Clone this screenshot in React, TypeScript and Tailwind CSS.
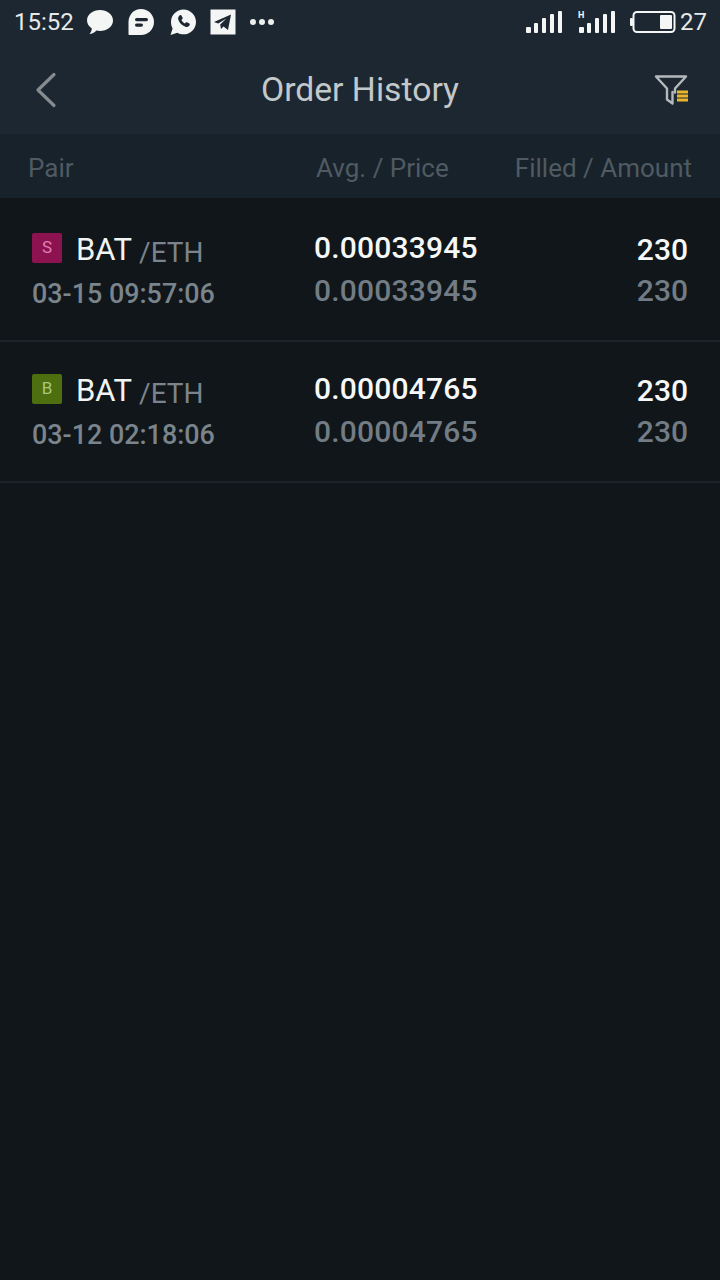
const orders = [
  { side: "S", badge: "bg-[#8c1350] text-[#e07fb0]", time: "03-15 09:57:06", price: "0.00033945", amount: "230" },
  { side: "B", badge: "bg-[#4d6f10] text-[#a9c77a]", time: "03-12 02:18:06", price: "0.00004765", amount: "230" },
];

function StatusBar() {
  return (
    <div className="flex h-[44px] items-center pl-[14px] pr-[13px] text-[24px] leading-none text-[#e6e9ea]">
      <span>15:52</span>
      <div className="ml-[12px] flex items-center gap-[13.5px]">
        <svg width="28" height="28" viewBox="0 0 28 28" fill="#f4f5f5">
          <path d="M14 2c7 0 13 4.400 13 10.500S21 23 14 23c-1.300 0-2.500-.1-3.600-.4C8.500 25 6 26 3.500 26c1.300-1.500 2.200-3.500 2.300-5.500C3 18.500 1 15.800 1 12.500 1 6.400 7 2 14 2z" />
        </svg>
        <svg width="28" height="28" viewBox="0 0 28 28">
          <path fill="#f4f5f5" d="M14 1c7.200 0 13 5.800 13 13s-5.800 13-13 13H2.500c-.6 0-1-.4-1-1V14C1.500 6.800 6.800 1 14 1z" />
          <rect x="8" y="10" width="13" height="3.200" rx="1.600" fill="#1d2731" />
          <rect x="8" y="15.500" width="8" height="3.200" rx="1.600" fill="#1d2731" />
        </svg>
        <svg width="28" height="28" viewBox="0 0 28 28">
          <path fill="#f4f5f5" d="M14.500 1.500c6.900 0 12.500 5.600 12.500 12.400 0 6.900-5.600 12.400-12.500 12.400-2.200 0-4.300-.6-6.100-1.600L1.500 27l2.100-6.500C2.600 18.600 2 16.300 2 13.900 2 7.100 7.600 1.500 14.500 1.500z" />
          <path fill="#1d2731" d="M10.500 7.500c.8-.6 1.700-.5 2.100.3l.9 1.800c.3.600.2 1.200-.3 1.700l-.8.8c.7 1.500 1.900 2.700 3.400 3.400l.8-.8c.5-.5 1.100-.6 1.700-.3l1.800.9c.8.400.9 1.300.3 2.100-1 1.300-2.500 1.800-4 1.300-3.400-1-6.100-3.700-7.100-7.100-.5-1.500 0-3 1.200-4.100z" />
        </svg>
        <svg width="26" height="26" viewBox="0 0 26 26">
          <rect width="25" height="25" x="0.500" y="0.500" fill="#f4f5f5" />
          <path fill="#1d2731" d="M4 13l17-7.500-3 15.500-4.500-3.500-2.500 2.500-.8-4.500 6.300-6-8.300 5z" />
        </svg>
      </div>
      <div className="ml-[14px] flex items-center gap-[3px]">
        <span className="size-[6px] rounded-full bg-[#eef0f0]" />
        <span className="size-[6px] rounded-full bg-[#eef0f0]" />
        <span className="size-[6px] rounded-full bg-[#eef0f0]" />
      </div>
      <div className="ml-auto flex items-center">
        <svg width="38" height="24" viewBox="0 0 38 24" fill="#f4f5f5">
          <rect x="1" y="17" width="5" height="6" rx="1" />
          <rect x="9" y="13" width="4" height="10" rx="1" />
          <rect x="17" y="8" width="4" height="15" rx="1" />
          <rect x="25" y="4" width="4" height="19" rx="1" />
          <rect x="33" y="1" width="4" height="22" rx="1" />
        </svg>
        <svg className="ml-[15px]" width="38" height="24" viewBox="0 0 38 24" fill="#f4f5f5">
          <text x="0" y="8" fontSize="9" fontFamily="Roboto, sans-serif" fontWeight="700">H</text>
          <rect x="1" y="17" width="5" height="6" rx="1" />
          <rect x="9" y="13" width="4" height="10" rx="1" />
          <rect x="17" y="8" width="4" height="15" rx="1" />
          <rect x="25" y="4" width="4" height="19" rx="1" />
          <rect x="33" y="1" width="4" height="22" rx="1" />
        </svg>
        <svg className="ml-[14px]" width="46" height="24" viewBox="0 0 46 24">
          <rect x="0" y="8" width="3" height="8" rx="1" fill="#f4f5f5" />
          <rect x="3.500" y="2" width="41" height="20" rx="3.500" fill="none" stroke="#f4f5f5" strokeWidth="2" />
          <rect x="30" y="5" width="12" height="14" rx="1" fill="#f4f5f5" />
        </svg>
        <span className="ml-[4px]">27</span>
      </div>
    </div>
  );
}

function BackIcon() {
  return (
    <svg className="ml-[4px]" width="24" height="36" viewBox="0 0 24 36" fill="none">
      <path d="M20 2.500L4 18l16 15.500" stroke="#858b8f" strokeWidth="3.200" strokeLinecap="round" strokeLinejoin="round" />
    </svg>
  );
}

function FilterIcon() {
  return (
    <svg width="36" height="32" viewBox="0 0 36 32" fill="none">
      <path d="M2 2.500h30l-11 12v4M2 2.500l11 12v11l5.500 4V18" stroke="#b4b9bc" strokeWidth="2.400" strokeLinejoin="round" strokeLinecap="round" />
      <path d="M23 18h11M23 22h11M23 26h11" stroke="#e9b62b" strokeWidth="2.800" />
    </svg>
  );
}

export default function App() {
  return (
    <div className="flex min-h-[1280px] flex-col bg-[#101619] font-['Roboto',sans-serif]">
      <div className="bg-[#1d2731]">
        <StatusBar />
        <div className="grid h-[90px] grid-cols-[36px_1fr_36px] items-center px-[30px] pt-[2px]">
          <BackIcon />
          <h1 className="text-center text-[33.7px] font-normal text-[#c3c8ca]">Order History</h1>
          <FilterIcon />
        </div>
      </div>
      <div className="flex h-[64px] items-center bg-[#18222a] pl-[28px] pr-[28px] pt-[4px] text-[26px] text-[#4f5a63]">
        <span className="w-[288px]">Pair</span>
        <span>Avg. / Price</span>
        <span className="ml-auto">Filled / Amount</span>
      </div>
      <div className="pt-[3px]">
        {orders.map((order) => (
          <div key={order.time} className="flex h-[141px] border-b-2 border-[#1b2529] pl-[32px] pr-[32px] pt-[25px]">
            <div className="w-[282px] pt-[4px]">
              <div className="flex h-[40px] items-center">
                <span className={`mb-[4px] grid size-[30px] place-items-center rounded-[2px] text-[17px] ${order.badge}`}>{order.side}</span>
                <span className="ml-[14px] text-[31px] text-[#f2f3f3]">BAT</span>
                <span className="ml-[7px] mt-[6px] text-[28px] text-[#7b848c]">/ETH</span>
              </div>
              <div className="mt-[4px] text-[26.9px] font-medium leading-[40px] text-[#7a848c]">{order.time}</div>
            </div>
            <div className="text-[30px] font-medium leading-[43px] tracking-[0.2px]">
              <div className="text-[#f6f7f7]">{order.price}</div>
              <div className="text-[#727c85]">{order.price}</div>
            </div>
            <div className="ml-auto pt-[3px] text-right text-[30px] font-medium leading-[41px]">
              <div className="text-[#f6f7f7]">{order.amount}</div>
              <div className="text-[#727c85]">{order.amount}</div>
            </div>
          </div>
        ))}
      </div>
    </div>
  );
}
